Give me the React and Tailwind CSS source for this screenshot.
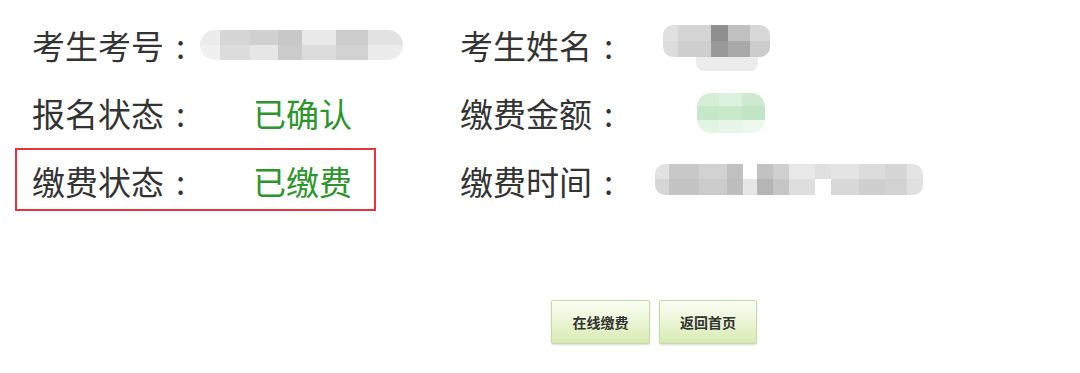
import React from "react";

const font = { fontFamily: '"Noto Sans CJK SC", "Noto Sans", sans-serif' };

function Mosaic({ cells, className }) {
  return (
    <div className={"flex overflow-hidden rounded-[10px] " + (className || "")}>
      {cells.map((c, i) => (
        <div key={i} className="flex flex-col" style={{ width: c.w }}>
          {c.cols.map((col, j) => (
            <div key={j} className="flex-1" style={{ background: col }} />
          ))}
        </div>
      ))}
    </div>
  );
}

function Label({ text, className }) {
  return (
    <div className={"flex " + (className || "")}>
      <span>{text}</span>
      <span className="inline-block w-[33px] text-center">:</span>
    </div>
  );
}

export default function App() {
  return (
    <div className="relative w-[1080px] h-[373px] bg-white text-[#333] overflow-hidden" style={font}>
      <div className="pl-[32px] pt-[11px]">
        {/* Row 1 */}
        <div className="flex items-center h-[68px] text-[33px] leading-none">
          <Label text="考生考号" className="w-[168px]" />
          <div className="w-[260px]">
            <Mosaic
              className="w-[203px] h-[30px] rounded-l-[15px] rounded-r-[15px]"
              cells={[
                { w: 20, cols: ["#ececec", "#f0f0f0"] },
                { w: 30, cols: ["#d6d6d6", "#dcdcdc"] },
                { w: 28, cols: ["#d0d0d0", "#e6e6e6"] },
                { w: 24, cols: ["#c8c8c8", "#cbcbcb"] },
                { w: 34, cols: ["#e8e8e8", "#dcdcdc"] },
                { w: 32, cols: ["#cdcdcd", "#d2d2d2"] },
                { w: 35, cols: ["#e2e2e2", "#ebebeb"] },
              ]}
            />
          </div>
          <Label text="考生姓名" className="w-[203px]" />
          <div className="flex flex-col mt-[6px]">
            <Mosaic
              className="w-[107px] h-[32px] rounded-[4px]"
              cells={[
                { w: 15, cols: ["#e0e0e0", "#dcdcdc"] },
                { w: 33, cols: ["#d5d5d5", "#cfcfcf"] },
                { w: 17, cols: ["#8f8f8f", "#999999"] },
                { w: 22, cols: ["#c0c0c0", "#a9a9a9"] },
                { w: 20, cols: ["#d8d8d8", "#cccccc"] },
              ]}
            />
            <div className="ml-[33px] w-[62px] h-[14px] bg-[#ececec] rounded-b-[8px]" />
          </div>
        </div>
        {/* Row 2 */}
        <div className="flex items-center h-[68px] text-[33px] leading-none">
          <Label text="报名状态" className="w-[221px]" />
          <div className="w-[207px] text-[#2b962b]">已确认</div>
          <Label text="缴费金额" className="w-[203px]" />
          <div className="ml-[34px]">
            <Mosaic
              className="w-[68px] h-[40px] rounded-[14px]"
              cells={[
                { w: 22, cols: ["#d4efd6", "#c4e8c8", "#e2f4e4"] },
                { w: 23, cols: ["#dcf2de", "#c8eacb", "#e8f6e9"] },
                { w: 23, cols: ["#cde9d0", "#c2e5c5", "#edf7ee"] },
              ]}
            />
          </div>
        </div>
        {/* Row 3 */}
        <div className="flex items-center h-[68px] text-[33px] leading-none">
          <Label text="缴费状态" className="w-[221px]" />
          <div className="w-[207px] text-[#2b962b]">已缴费</div>
          <Label text="缴费时间" className="w-[203px]" />
          <div className="-ml-[8px] -mt-[4px]">
            <Mosaic
              className="w-[268px] h-[31px] rounded-[2px]"
              cells={[
                { w: 14, cols: ["#e2e2e2", "#d6d6d6"] },
                { w: 30, cols: ["#c8c8c8", "#c4c4c4"] },
                { w: 28, cols: ["#d2d2d2", "#cbcbcb"] },
                { w: 16, cols: ["#c0c0c0", "#bdbdbd"] },
                { w: 14, cols: ["#ffffff", "#e6e6e6"] },
                { w: 16, cols: ["#c2c2c2", "#b5b5b5"] },
                { w: 16, cols: ["#d0d0d0", "#c6c6c6"] },
                { w: 26, cols: ["#e8e8e8", "#dedede"] },
                { w: 16, cols: ["#e0e0e0", "#ffffff"] },
                { w: 28, cols: ["#e4e4e4", "#d8d8d8"] },
                { w: 26, cols: ["#dcdcdc", "#cfcfcf"] },
                { w: 22, cols: ["#d6d6d6", "#d2d2d2"] },
                { w: 16, cols: ["#e4e4e4", "#e0e0e0"] },
              ]}
            />
          </div>
        </div>
      </div>

      {/* red annotation box */}
      <div className="absolute left-[15px] top-[148px] w-[361px] h-[63px] border-2 border-[#e8323c]" />

      {/* buttons */}
      <div className="flex justify-start gap-[9px] pl-[551px] mt-[85px]">
        <button className="w-[99px] h-[44px] rounded-[2px] border border-[#c9dca6] bg-gradient-to-b from-[#fbfdf4] to-[#d9ebb3] text-[14px] font-bold text-[#333] shadow-[0_1px_2px_rgba(0,0,0,0.15)]">
          在线缴费
        </button>
        <button className="w-[98px] h-[44px] rounded-[2px] border border-[#c9dca6] bg-gradient-to-b from-[#fbfdf4] to-[#d9ebb3] text-[14px] font-bold text-[#333] shadow-[0_1px_2px_rgba(0,0,0,0.15)]">
          返回首页
        </button>
      </div>
    </div>
  );
}
